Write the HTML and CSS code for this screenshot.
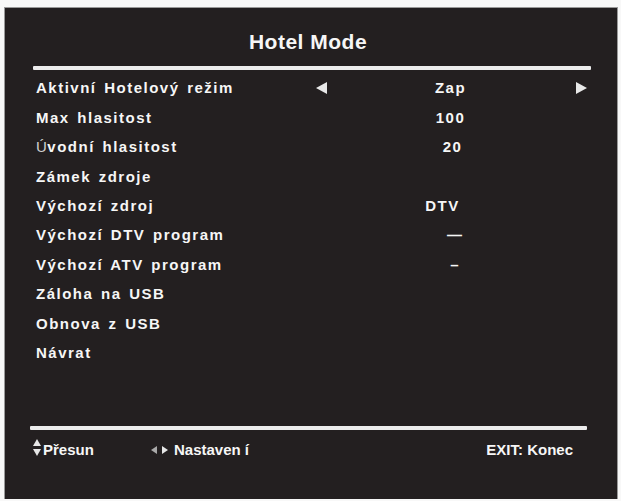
FILE: index.html
```html
<!DOCTYPE html>
<html lang="cs">
<head>
<meta charset="utf-8">
<title>Hotel Mode</title>
<link rel="stylesheet" href="styles.css">
</head>
<body>
<div class="osd">
  <h1 class="osd-title">Hotel Mode</h1>
  <div class="rule rule-top"></div>
  <ul class="menu">
    <li class="menu-row">
      <span class="label">Aktivní Hotelový režim</span>
      <svg class="arrow" width="11" height="12" viewBox="0 0 11 12"><polygon points="0,6 11,0 11,12"/></svg>
      <span class="value">Zap</span>
      <svg class="arrow" width="11" height="12" viewBox="0 0 11 12"><polygon points="0,0 11,6 0,12"/></svg>
    </li>
    <li class="menu-row"><span class="label">Max hlasitost</span><span></span><span class="value">100</span><span></span></li>
    <li class="menu-row"><span class="label"><span class="fallback">Ú</span>vodní hlasitost</span><span></span><span class="value value-twenty">20</span><span></span></li>
    <li class="menu-row"><span class="label">Zámek zdroje</span><span></span><span class="value"></span><span></span></li>
    <li class="menu-row"><span class="label">Výchozí zdroj</span><span></span><span class="value value-dtv">DTV</span><span></span></li>
    <li class="menu-row"><span class="label">Výchozí DTV program</span><span></span><span class="value value-dash">—</span><span></span></li>
    <li class="menu-row"><span class="label">Výchozí ATV program</span><span></span><span class="value value-dash value-short">–</span><span></span></li>
    <li class="menu-row"><span class="label">Záloha na USB</span><span></span><span class="value"></span><span></span></li>
    <li class="menu-row"><span class="label">Obnova z USB</span><span></span><span class="value"></span><span></span></li>
    <li class="menu-row"><span class="label">Návrat</span><span></span><span class="value"></span><span></span></li>
  </ul>
  <div class="rule rule-bottom"></div>
  <div class="footer">
    <div class="hint hint-move">
      <svg class="hint-icon updown" width="8" height="18" viewBox="0 0 8 18"><polygon points="4,0 8,7 0,7"/><polygon points="0,10 8,10 4,17"/></svg>
      <span>Přesun</span>
    </div>
    <div class="hint hint-set">
      <svg class="hint-icon leftright" width="17" height="8" viewBox="0 0 17 8"><polygon class="dim" points="0,4 6,0 6,8"/><polygon points="11,0 17,4 11,8"/></svg>
      <span>Nastaven í</span>
    </div>
    <div class="hint hint-exit">EXIT: Konec</div>
  </div>
</div>
</body>
</html>
```
FILE: styles.css
```css
html, body {
  margin: 0;
  background: #f8f8f8;
}

body {
  padding: 8px 0 0 5px;
  font-family: "Liberation Sans", Arial, sans-serif;
}

.osd {
  width: 612px;
  height: 491px;
  box-sizing: border-box;
  background: #231f20;
  color: #f6f6f6;
  outline: 1px solid #9a9a9a;
  display: flex;
  flex-direction: column;
}

.osd-title {
  margin: 0;
  padding-top: 22px;
  font-size: 21px;
  line-height: 24px;
  font-weight: 700;
  letter-spacing: 0.5px;
  text-align: center;
  padding-right: 6px;
}

.rule {
  height: 4px;
  background: #ececec;
  border-radius: 1px;
}

.rule-top {
  margin: 12px 0 0 28px;
  width: 558px;
}

.rule-bottom {
  margin: 58.7px 0 0 25px;
  width: 557px;
}

.menu {
  list-style: none;
  margin: 3.3px 0 0;
  padding: 0;
}

.menu-row {
  display: grid;
  grid-template-columns: 280px 11px 249px 11px;
  align-items: center;
  height: 29.4px;
  padding-left: 31px;
  font-size: 15px;
  font-weight: 700;
  letter-spacing: 1.5px;
  word-spacing: 2px;
}

.label {
  white-space: nowrap;
}

.fallback {
  font-weight: 400;
  color: #cfcfcf;
  letter-spacing: 0.5px;
}

.value {
  text-align: center;
  white-space: nowrap;
  padding-right: 2px;
}

.value-twenty {
  padding-right: 0;
  padding-left: 2px;
}

.value-dtv {
  padding-right: 18px;
}

.value-dash {
  padding-right: 0;
  padding-left: 6px;
  letter-spacing: 0;
}

.value-short {
  display: flex;
  justify-content: center;
  padding-left: 6px;
}

.value-short::before {
  content: "";
}

.arrow {
  display: block;
  fill: #e8e8e8;
}

.footer {
  display: flex;
  align-items: center;
  margin-top: 10px;
  height: 20px;
  padding-left: 28px;
  padding-right: 44px;
  font-size: 15px;
  font-weight: 700;
}

.hint {
  display: flex;
  align-items: center;
  white-space: nowrap;
}

.hint-move {
  width: 118px;
  gap: 2px;
}

.hint-set {
  flex: 1;
  gap: 6px;
}

.hint-icon {
  display: block;
  fill: #e6e6e6;
}

.updown {
  margin-bottom: 4px;
}

.leftright .dim {
  fill: #a9a9a9;
}
```
